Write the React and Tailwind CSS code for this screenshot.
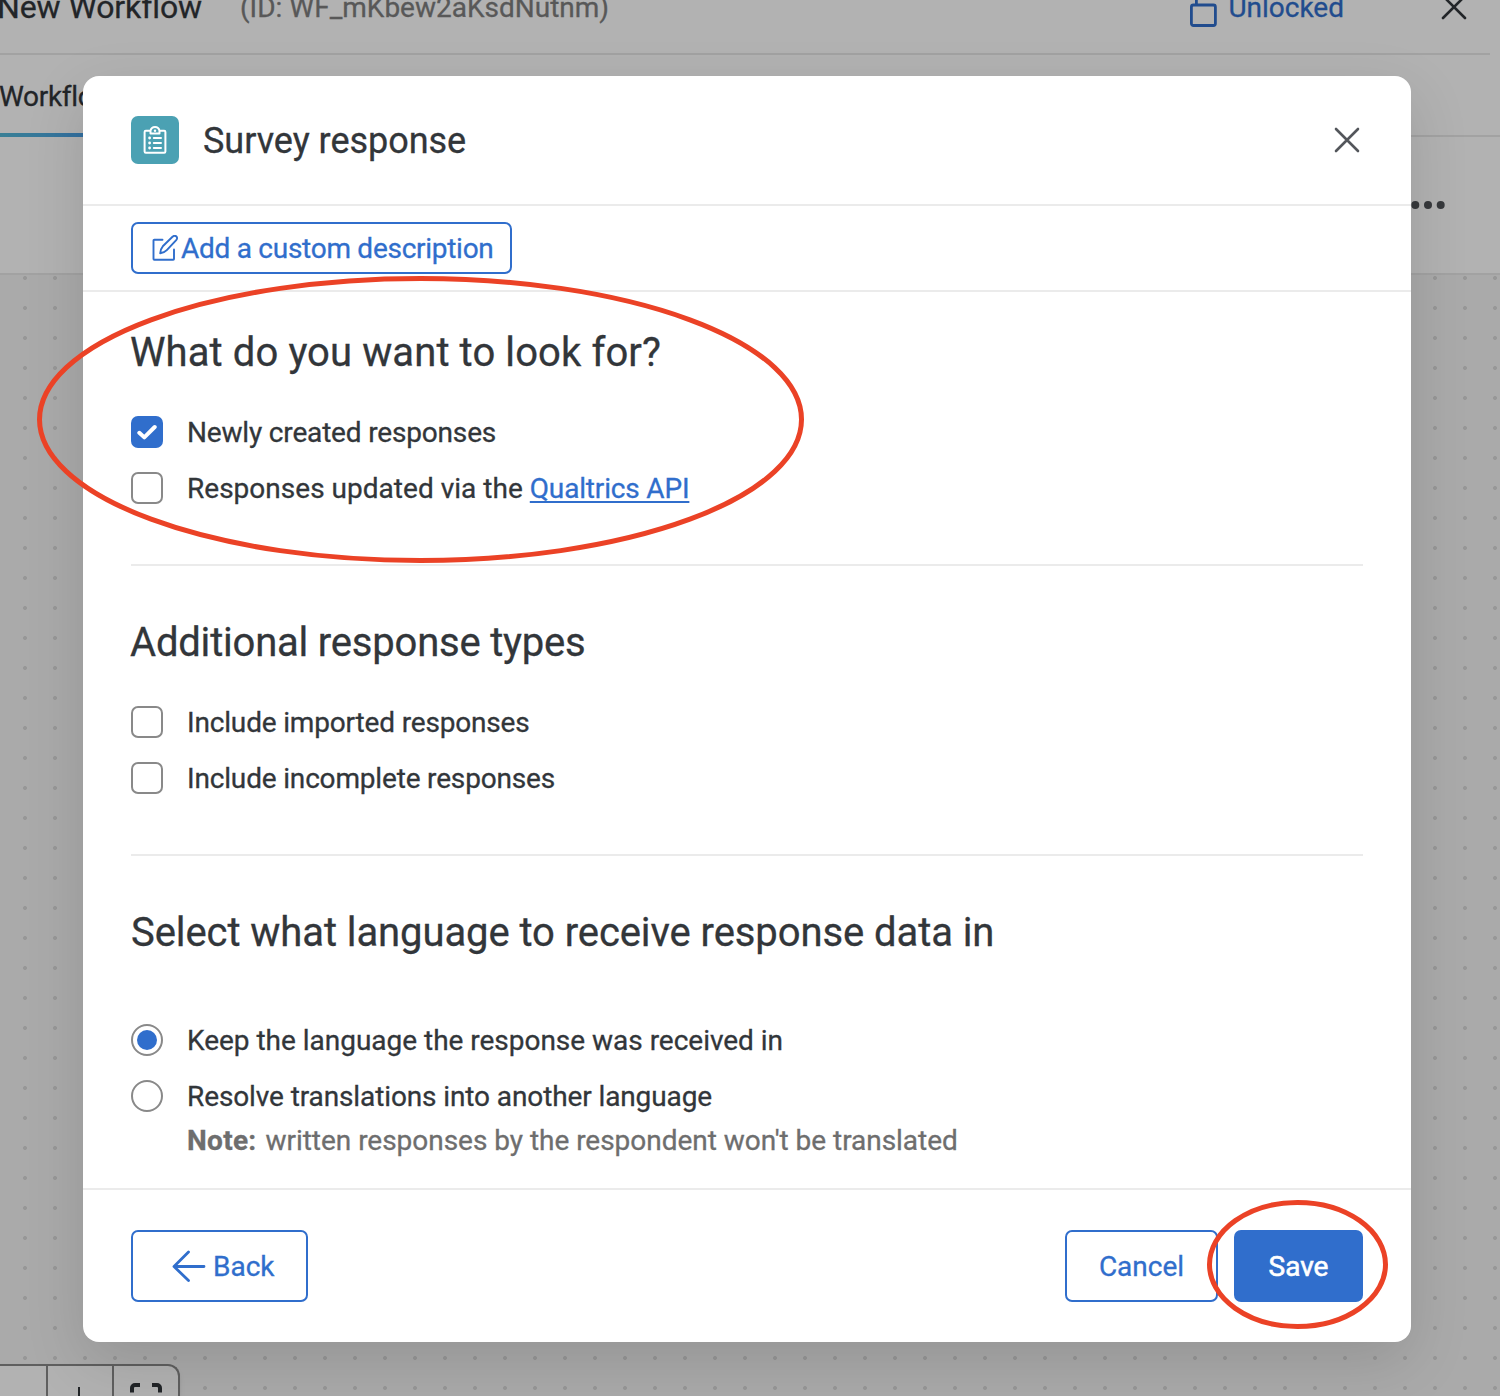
import { useState } from "react";

export default function App() {
  return (
    <div className="relative h-[1396px] w-[1500px] overflow-hidden bg-white font-['Roboto',sans-serif] text-[28px] leading-8 text-[#32363a] [-webkit-text-stroke:0.3px]">
      <WorkflowPage />
      <div className="absolute inset-0 bg-black/30" />
      <div className="absolute inset-0 flex items-start pt-[76px] pl-[83px]">
        <SurveyResponseModal />
      </div>
      <Annotations />
    </div>
  );
}

function WorkflowPage() {
  return (
    <div className="-mt-[39px] flex h-[1435px] flex-col">
      {/* Title bar */}
      <header className="mr-[10px] flex h-[94px] shrink-0 items-center border-b-2 border-[#e9e9e9]">
        <h1 className="-ml-[3px] text-[32px] tracking-[-0.1px]">New Workflow</h1>
        <span className="ml-[38px] pt-0.5 text-[#7f7f7f]">(ID: WF_mKbew2aKsdNutnm)</span>
        <button className="ml-auto flex items-center gap-[10px] text-[#306ecc]">
          <UnlockIcon />
          <span className="pt-0.5">Unlocked</span>
        </button>
        <button className="mr-[23px] ml-[97px]">
          <CloseIcon />
        </button>
      </header>

      {/* Tabs */}
      <nav className="flex h-[82px] shrink-0 items-stretch border-b-2 border-[#e9e9e9]">
        <div className="-mb-0.5 -ml-px flex flex-col justify-between">
          <span className="pt-[26px] tracking-[-0.3px]">Workflow</span>
          <span className="h-1 bg-linear-to-r from-[#53b7d6] to-[#4797ea]" />
        </div>
      </nav>

      <div className="flex h-[138px] shrink-0 items-center justify-end border-b-2 border-[#e9e9e9] pr-[55px]">
        <button>
          <svg width="34" height="8" viewBox="0 0 34 8" fill="#4f5257">
            <circle cx="4.3" cy="4" r="4" />
            <circle cx="17" cy="4" r="4" />
            <circle cx="29.7" cy="4" r="4" />
          </svg>
        </button>
      </div>

      {/* Canvas */}
      <div className="flex grow items-end overflow-hidden bg-[#f4f4f4] bg-[radial-gradient(circle,#d8d8d8_1.6px,transparent_2.3px)] bg-size-[30px_30px] bg-position-[10px_-12px]">
        <div className="-ml-5 flex h-8 w-[200px] rounded-tr-xl border-t-2 border-r-2 border-[#898989] bg-white shadow-md">
          <div className="w-[68px] border-r-2 border-[#898989]" />
          <div className="flex w-[66px] justify-center border-r-2 border-[#898989] pt-[21px] pr-0.5">
            <span className="h-3 w-0.5 bg-[#32363a]" />
          </div>
          <div className="flex grow justify-center pt-[17px]">
            <svg width="32" height="13" viewBox="0 0 32 13" fill="none" stroke="#32363a" strokeWidth="4">
              <path d="M2 9.500V5a3 3 0 0 1 3-3h5M22 2h5a3 3 0 0 1 3 3v4.500" />
            </svg>
          </div>
        </div>
      </div>
    </div>
  );
}

function SurveyResponseModal() {
  const [lookFor, setLookFor] = useState({ created: true, updated: false });
  const [types, setTypes] = useState({ imported: false, incomplete: false });
  const [language, setLanguage] = useState("keep");

  return (
    <section className="flex h-[1266px] w-[1328px] flex-col rounded-2xl bg-white shadow-[0_20px_60px_rgba(0,0,0,0.13)]">
      <header className="flex h-[130px] items-center border-b-2 border-[#ebebeb] px-12">
        <span className="flex size-12 items-center justify-center rounded-[7px] bg-[#4ba1b3]">
          <ClipboardIcon />
        </span>
        <h2 className="ml-6 pt-0.5 text-[36px] leading-10 tracking-[-0.03px]">Survey response</h2>
        <button className="mr-[3px] ml-auto text-[#53565b]">
          <CloseIcon />
        </button>
      </header>

      <div className="flex h-[86px] items-center border-b-2 border-[#ebebeb] px-12">
        <button className="flex h-[52px] w-[381px] items-center rounded-[7px] border-2 border-[#306ecc] pl-[19px] text-[#306ecc]">
          <EditIcon />
          <span className="ml-0.5 whitespace-nowrap pt-0.5 tracking-[-0.27px]">Add a custom description</span>
        </button>
      </div>

      <div className="flex grow flex-col px-12">
        <div className="border-b-2 border-[#ebebeb] pt-[37px] pb-[60px]">
          <h3 className="-ml-px text-[40px] leading-12 tracking-[0.1px]">What do you want to look for?</h3>
          <div className="mt-[39px] flex flex-col gap-6">
            <Checkbox
              checked={lookFor.created}
              onChange={() => setLookFor({ ...lookFor, created: !lookFor.created })}
            >
              Newly created responses
            </Checkbox>
            <Checkbox
              checked={lookFor.updated}
              onChange={() => setLookFor({ ...lookFor, updated: !lookFor.updated })}
            >
              <span className="tracking-[0.02px]">Responses updated via the </span>
              <a className="text-[#306ecc] underline decoration-[1.5px] underline-offset-[3px] [text-decoration-skip-ink:none]">
                Qualtrics API
              </a>
            </Checkbox>
          </div>
        </div>

        <div className="border-b-2 border-[#ebebeb] pt-[53px] pb-[60px]">
          <h3 className="-ml-px text-[40px] leading-12 tracking-[-0.2px]">Additional response types</h3>
          <div className="mt-[39px] flex flex-col gap-6">
            <Checkbox
              checked={types.imported}
              onChange={() => setTypes({ ...types, imported: !types.imported })}
            >
              Include imported responses
            </Checkbox>
            <Checkbox
              checked={types.incomplete}
              onChange={() => setTypes({ ...types, incomplete: !types.incomplete })}
            >
              Include incomplete responses
            </Checkbox>
          </div>
        </div>

        <div className="pt-[53px]">
          <h3 className="text-[40px] leading-12 tracking-[-0.08px]">
            Select what language to receive response data in
          </h3>
          <div className="mt-[67px] flex flex-col gap-6">
            <Radio checked={language === "keep"} onChange={() => setLanguage("keep")}>
              <span className="tracking-[-0.02px]">Keep the language the response was received in</span>
            </Radio>
            <Radio checked={language === "resolve"} onChange={() => setLanguage("resolve")}>
              <span className="tracking-[-0.11px]">Resolve translations into another language</span>
            </Radio>
          </div>
          <p className="mt-[13px] pl-14 tracking-[-0.03px] text-[#6e6e6e]">
            <b className="mr-0.5 font-bold tracking-[0.3px]">Note:</b> written responses by the respondent won't be translated
          </p>
        </div>
      </div>

      <footer className="flex h-[154px] items-start border-t-2 border-[#ebebeb] px-12 pt-10">
        <button className="flex h-[72px] w-[177px] items-center rounded-[7px] border-2 border-[#306ecc] pl-[39px] text-[#306ecc]">
          <svg width="34" height="32" viewBox="0 0 34 32" fill="none" stroke="currentColor" strokeWidth="2.8" strokeLinecap="round" strokeLinejoin="round">
            <path d="M32 16.500H2.500M16.500 2 2 16.500l14.500 14" />
          </svg>
          <span className="ml-[7px] pt-0.5">Back</span>
        </button>
        <button className="ml-auto h-[72px] w-[153px] rounded-[7px] border-2 border-[#306ecc] pt-0.5 text-[#306ecc]">
          Cancel
        </button>
        <button className="ml-4 h-[72px] w-[129px] rounded-[7px] bg-[#306ecc] pt-0.5 text-white [-webkit-text-stroke:0.6px]">
          Save
        </button>
      </footer>
    </section>
  );
}

function Checkbox({ checked, onChange, children }) {
  return (
    <div className="flex h-8 items-center gap-6">
      <button
        role="checkbox"
        aria-checked={checked}
        onClick={onChange}
        className={`flex size-8 items-center justify-center rounded-[7px] ${checked ? "bg-[#306ecc]" : "border-2 border-[#898989] bg-white"}`}
      >
        {checked ? (
          <svg width="20" height="16" viewBox="0 0 20 16" fill="none" stroke="white" strokeWidth="4" strokeLinecap="round" strokeLinejoin="round">
            <path d="m2.300 8.800 5 4.600L17.700 3" />
          </svg>
        ) : null}
      </button>
      <span className="whitespace-pre pt-0.5 tracking-[-0.17px]">{children}</span>
    </div>
  );
}

function Radio({ checked, onChange, children }) {
  return (
    <div className="flex h-8 items-center gap-6">
      <button
        role="radio"
        aria-checked={checked}
        onClick={onChange}
        className="flex size-8 items-center justify-center rounded-full border-2 border-[#898989] bg-white"
      >
        {checked ? <span className="size-5 rounded-full bg-[#306ecc]" /> : null}
      </button>
      <span className="whitespace-nowrap pt-0.5">{children}</span>
    </div>
  );
}

function CloseIcon() {
  return (
    <svg width="26" height="26" viewBox="0 0 26 26" fill="none" stroke="currentColor" strokeWidth="2.6" strokeLinecap="round">
      <path d="m2 2 22 22M24 2 2 24" />
    </svg>
  );
}

function UnlockIcon() {
  return (
    <svg width="28" height="40" viewBox="0 0 28 40" fill="none" stroke="currentColor" strokeWidth="2.8">
      <rect x="1.400" y="18" width="24" height="20.500" rx="2" />
      <path d="M6.400 18V9.500a7.600 7.600 0 0 1 15.200 0" />
    </svg>
  );
}

function ClipboardIcon() {
  return (
    <svg width="24" height="28" viewBox="0 0 24 28" fill="none" stroke="white" strokeWidth="2" strokeLinejoin="round">
      <path d="M7.500 4.800H2.800c-.7 0-1.200.5-1.200 1.200v19.600c0 .7.500 1.200 1.200 1.200h18.400c.7 0 1.200-.5 1.200-1.200V6c0-.7-.5-1.200-1.200-1.200h-4.700C16 2.400 14.300 1 12 1S8 2.400 7.500 4.800v2.700h9V4.800" />
      <circle cx="12" cy="4.800" r="1.200" fill="white" stroke="none" />
      <path d="M10.800 12H18M10.800 17H18M10.800 22H18" strokeLinecap="round" />
      <path d="M6.600 12h.01M6.600 17h.01M6.600 22h.01" strokeWidth="2.800" strokeLinecap="round" />
    </svg>
  );
}

function EditIcon() {
  return (
    <svg width="27" height="27" viewBox="0 0 27 27" fill="none" stroke="currentColor" strokeWidth="1.900" strokeLinecap="round" strokeLinejoin="round">
      <path d="M10.500 4.800H2.300c-.5 0-.8.3-.8.8v18.400c0 .5.300.800.800.800h18.900c.5 0 .8-.3.8-.8v-9.500" />
      <path d="M8.200 18.300c.2-3 1-5.200 2.600-7L20.500 1.800c1.200-1.100 2.900-1.200 3.900-.3s.9 2.500-.2 3.700l-9.400 10c-1.600 1.700-3.500 2.600-6.600 3.100Z" />
    </svg>
  );
}

// Red ellipses circling the options and the Save button
function Annotations() {
  return (
    <svg className="pointer-events-none absolute inset-0" width="1500" height="1396" fill="none" stroke="#eb4226" strokeWidth="5">
      <ellipse cx="420.5" cy="419.500" rx="381" ry="141" />
      <ellipse cx="1297.500" cy="1264.500" rx="88" ry="62" />
    </svg>
  );
}
